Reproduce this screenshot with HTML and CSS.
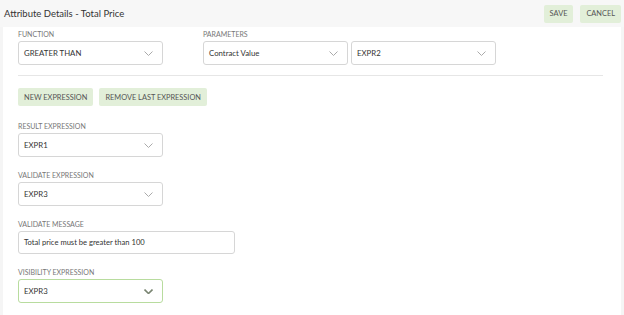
FILE: index.html
```html
<!DOCTYPE html>
<html lang="en">
<head>
    <meta charset="UTF-8">
    <title>Attribute Details - Total Price</title>
    <link rel="stylesheet" href="styles.css">
</head>
<body>
    <div class="page">
        <div class="page-header">
            <h1>Attribute Details - Total Price</h1>
            <div class="header-actions">
                <button class="btn">SAVE</button>
                <button class="btn">CANCEL</button>
            </div>
        </div>

        <div class="panel">
            <div class="row">
                <div class="field">
                    <div class="field-label">FUNCTION</div>
                    <div class="select">GREATER THAN<svg class="chevron" viewBox="0 0 9 5"><polyline points="0.5,0.5 4.5,4.5 8.5,0.5"/></svg></div>
                </div>
                <div class="field">
                    <div class="field-label">PARAMETERS</div>
                    <div class="select-group">
                        <div class="select">Contract Value<svg class="chevron" viewBox="0 0 9 5"><polyline points="0.5,0.5 4.5,4.5 8.5,0.5"/></svg></div>
                        <div class="select">EXPR2<svg class="chevron" viewBox="0 0 9 5"><polyline points="0.5,0.5 4.5,4.5 8.5,0.5"/></svg></div>
                    </div>
                </div>
            </div>

            <div class="divider"></div>

            <div class="button-row">
                <button class="btn">NEW EXPRESSION</button>
                <button class="btn">REMOVE LAST EXPRESSION</button>
            </div>

            <div class="field">
                <div class="field-label">RESULT EXPRESSION</div>
                <div class="select">EXPR1<svg class="chevron" viewBox="0 0 9 5"><polyline points="0.5,0.5 4.5,4.5 8.5,0.5"/></svg></div>
            </div>

            <div class="field">
                <div class="field-label">VALIDATE EXPRESSION</div>
                <div class="select">EXPR3<svg class="chevron" viewBox="0 0 9 5"><polyline points="0.5,0.5 4.5,4.5 8.5,0.5"/></svg></div>
            </div>

            <div class="field">
                <div class="field-label">VALIDATE MESSAGE</div>
                <div class="text-input">Total price must be greater than 100</div>
            </div>

            <div class="field">
                <div class="field-label">VISIBILITY EXPRESSION</div>
                <div class="select focused">EXPR3<svg class="chevron" viewBox="0 0 9 5"><polyline points="0.5,0.5 4.5,4.5 8.5,0.5"/></svg></div>
            </div>
        </div>
    </div>
</body>
</html>
```

FILE: styles.css
```css
body {
    margin: 0;
    background: #f5f5f5;
    font-family: 'Lato', 'Open Sans', sans-serif;
    color: #333;
}

.page {
    width: 624px;
    height: 315px;
    overflow: hidden;
}

.page-header {
    display: flex;
    justify-content: space-between;
    align-items: center;
    height: 27px;
    padding: 0 3px 0 4px;
    background: #f7f7f7;
}

.page-header h1 {
    margin: 0;
    font-size: 9.5px;
    font-weight: 400;
    color: #333;
}

.header-actions {
    display: flex;
    gap: 7px;
}

.btn {
    background: #e2efd9;
    border: none;
    border-radius: 2px;
    height: 18px;
    padding: 0 6px;
    font-family: 'Lato', sans-serif;
    font-size: 7.4px;
    color: #555;
    cursor: pointer;
}

.panel {
    margin: 0 3px;
    height: 288px;
    background: #fff;
    padding: 1px 15px 0;
}

.row {
    display: flex;
    gap: 40px;
}

.field {
    margin-bottom: 12px;
}

.row .field {
    margin-bottom: 0;
}

.field-label {
    font-size: 7px;
    color: #777;
    height: 13px;
    line-height: 13px;
}

.select-group {
    display: flex;
    gap: 3px;
}

.select {
    position: relative;
    box-sizing: border-box;
    width: 145px;
    height: 24px;
    line-height: 22px;
    padding: 0 5px;
    border: 1px solid #d6d6d6;
    border-radius: 3px;
    font-size: 7.8px;
    color: #333;
}

.select.focused {
    border-color: #b8dc9e;
}

.chevron {
    position: absolute;
    right: 9px;
    top: 9px;
    width: 9px;
    height: 5px;
    fill: none;
    stroke: #aaa;
    stroke-width: 1;
}

.focused .chevron {
    stroke: #7a8572;
    stroke-width: 1.6;
}

.divider {
    width: 585px;
    height: 1px;
    background: #e6e6e6;
    margin: 10px 0 12px;
}

.button-row {
    display: flex;
    gap: 6px;
    margin-bottom: 14px;
}

.text-input {
    box-sizing: border-box;
    width: 217px;
    height: 23px;
    line-height: 21px;
    padding: 0 5px;
    border: 1px solid #d6d6d6;
    border-radius: 3px;
    font-size: 7.6px;
    color: #333;
}
```
